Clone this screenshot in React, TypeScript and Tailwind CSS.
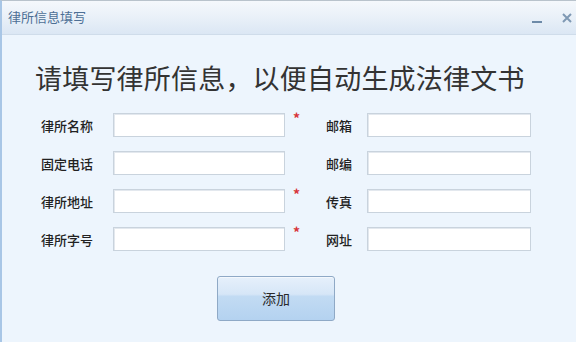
import React from "react";

const font = { fontFamily: '"Noto Sans CJK SC", "Noto Sans", sans-serif' };

function Field({ w }: { w: string }) {
  return (
    <div
      className={`${w} h-[24px] bg-white border border-[#c9d3dd] shadow-[inset_1px_1px_0_#e3e8ee]`}
    />
  );
}

function Row({
  left,
  right,
  req,
}: {
  left: string;
  right: string;
  req: boolean;
}) {
  return (
    <div className="flex items-center h-[24px]">
      <div className="w-[72px] text-[13px] font-medium text-[#222] leading-none">{left}</div>
      <Field w="w-[172px]" />
      <div className="w-[41px] h-full relative">
        {req && (
          <span className="absolute left-[8px] top-[-2px] text-[#d8343a] text-[14px] leading-none font-bold">
            *
          </span>
        )}
      </div>
      <div className="w-[41px] text-[13px] font-medium text-[#222] leading-none">{right}</div>
      <Field w="w-[164px]" />
    </div>
  );
}

export default function App() {
  return (
    <div
      className="w-[576px] h-[342px] overflow-hidden bg-[#edf5fd] flex flex-col border-l-2 border-[#a8c6e6] border-t border-t-[#b9c3cc]"
      style={font}
    >
      <div className="h-[34px] shrink-0 flex items-center justify-between bg-gradient-to-b from-[#f5f8fc] via-[#e9f0f8] to-[#dbe7f4] border-b border-[#cfdcea] pl-[6px] pr-[4px]">
        <span className="text-[13px] text-[#4d6f95] leading-none mt-[-2px]">律所信息填写</span>
        <div className="flex items-center gap-[20px] text-[#5f7f9f]">
          <svg width="10" height="12" viewBox="0 0 10 12">
            <rect x="0" y="9" width="10" height="2" fill="#6d8aa8" />
          </svg>
          <svg width="10" height="10" viewBox="0 0 10 10">
            <path d="M1 1 L9 9 M9 1 L1 9" stroke="#7f99b4" strokeWidth="2" />
          </svg>
        </div>
      </div>
      <div className="flex flex-col pl-[39px]">
        <div className="mt-[29px] ml-[-6px] text-[27px] leading-none text-[#333] tracking-[0.2px]">
          请填写律所信息，以便自动生成法律文书
        </div>
        <div className="mt-[22px] flex flex-col gap-[14px]">
          <Row left="律所名称" right="邮箱" req />
          <Row left="固定电话" right="邮编" req={false} />
          <Row left="律所地址" right="传真" req />
          <Row left="律所字号" right="网址" req />
        </div>
        <div className="mt-[25px] ml-[176px]">
          <button className="w-[118px] h-[45px] rounded-[3px] border border-[#8fa9c6] bg-[linear-gradient(to_bottom,#e6f0fb_0%,#d6e6f7_40%,#c2dbf3_45%,#b4d2f0_100%)] text-[14px] text-[#2a2a2a] shadow-[inset_0_1px_0_#f4f8fd]">
            添加
          </button>
        </div>
      </div>
    </div>
  );
}
